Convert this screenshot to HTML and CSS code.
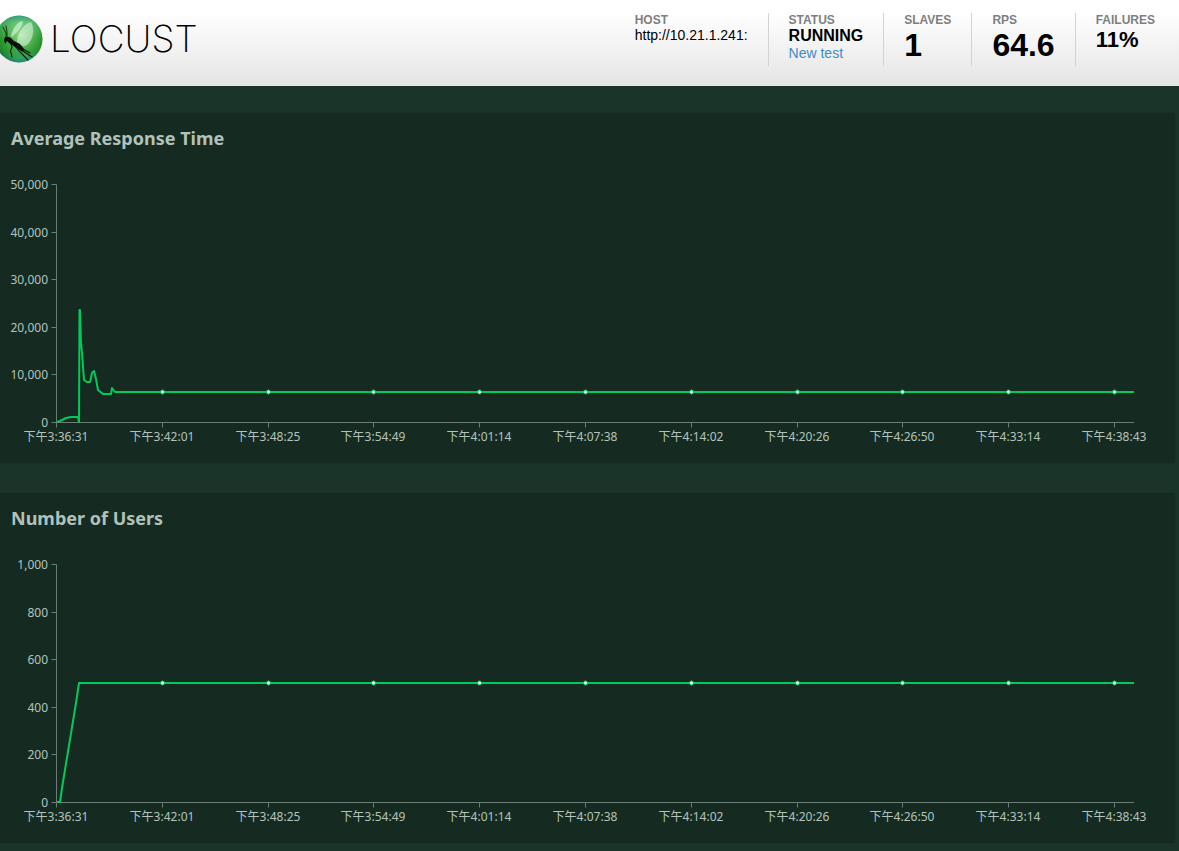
FILE: index.html
```html
<!DOCTYPE html>
<html lang="en">
<head>
<meta charset="utf-8">
<title>Locust</title>
<link rel="stylesheet" href="styles.css">
</head>
<body>
<header class="top">
  <div class="brand">
    <svg class="brand-mark" viewBox="0 0 44 50" aria-hidden="true">
      <defs>
        <linearGradient id="ball" x1="0" y1="0" x2="0" y2="1">
          <stop offset="0" stop-color="#3fa3a0"/>
          <stop offset=".15" stop-color="#5cbd74"/>
          <stop offset=".5" stop-color="#2c9a2c"/>
          <stop offset=".78" stop-color="#2fa038"/>
          <stop offset="1" stop-color="#52c8b8"/>
        </linearGradient>
        <radialGradient id="rim" cx=".55" cy=".42" r=".56">
          <stop offset="0" stop-color="#c8f4c4" stop-opacity=".75"/>
          <stop offset=".5" stop-color="#7ed080" stop-opacity=".35"/>
          <stop offset=".85" stop-color="#107a18" stop-opacity=".3"/>
          <stop offset="1" stop-color="#0d6040" stop-opacity=".6"/>
        </radialGradient>
      </defs>
      <circle cx="19" cy="25" r="23.5" fill="url(#ball)"/>
      <circle cx="19" cy="25" r="23.5" fill="url(#rim)"/>
      <path d="M11 22C13 13 18 8 22 7C25 8 20 16 12 23Z" fill="#e4f8e2" opacity=".6"/>
      <path d="M17 27C18 17 25 9 31 8C36 16 32 29 25 32C20 32 17 30 17 27Z" fill="#e4f8e2" opacity=".55"/>
      <path d="M4 26L5 23L9 23L11 24L14 27L20 30L24 35L23 38L18 35L12 31L9 29L7 27L5 30Z" fill="#0b120d"/>
      <g fill="none" stroke="#0b120d" stroke-linecap="round">
        <path d="M6 24L6 19L3 13M7 23L7 18L6 12" stroke-width=".8"/>
        <path d="M10 28L12 33L10.500 37L12 43" stroke-width="1"/>
        <path d="M15 32L20 38L28 46M20 35L32 43M23 35L30 39" stroke-width="1.100"/>
      </g>
    </svg>
    <span class="brand-name">LOCUST</span>
  </div>
  <div class="stats">
    <div class="stat"><span class="label">HOST</span><span class="host">http://10.21.1.241:</span></div>
    <div class="stat"><span class="label">STATUS</span><strong class="status">RUNNING</strong><a class="link" href="#new">New test</a></div>
    <div class="stat"><span class="label">SLAVES</span><strong class="big">1</strong></div>
    <div class="stat"><span class="label">RPS</span><strong class="big">64.6</strong></div>
    <div class="stat"><span class="label">FAILURES</span><strong class="medium">11%</strong></div>
  </div>
</header>
<main class="charts">
  <section class="panel">
    <h2 class="title">Average Response Time</h2>
    <svg class="chart" id="response" viewBox="0 0 1175 300" role="img" aria-label="Average Response Time"></svg>
  </section>
  <section class="panel">
    <h2 class="title">Number of Users</h2>
    <svg class="chart" id="users" viewBox="0 0 1175 300" role="img" aria-label="Number of Users"></svg>
  </section>
</main>
<script src="charts.js"></script>
</body>
</html>
```
FILE: styles.css
```css
* { box-sizing: border-box; }
body {
  margin: 0;
  background: #1a342a;
  color: #b3c3bc;
  font-family: "Noto Sans", "Noto Sans CJK SC", sans-serif;
}
.top {
  display: flex;
  justify-content: space-between;
  align-items: flex-start;
  height: 86px;
  padding: 13px 4px 0 0;
  background: linear-gradient(#fff 0, #fff 15%, #e4e4e4 100%);
  font-family: "Liberation Sans", Arial, sans-serif;
  color: #000;
}
.brand { display: flex; align-items: center; gap: 6px; padding-top: 1px; }
.brand-mark { width: 44px; height: 50px; }
.brand-name {
  font-family: Inter, Lato, sans-serif;
  font-weight: 200;
  font-size: 37px;
  line-height: 50px;
}
.stats { display: flex; }
.stat {
  display: flex;
  flex-direction: column;
  align-items: flex-start;
  height: 53px;
  padding: 0 20px;
}
.stat + .stat { border-left: 1px solid #d3d3d3; }
.label { font-size: 12px; line-height: 14px; font-weight: bold; color: #7f7f7f; }
.host { font-size: 14px; line-height: 17px; }
.status { font-size: 16px; line-height: 18px; }
.link { font-size: 14px; line-height: 17px; color: #428bca; text-decoration: none; }
.big { font-size: 32px; line-height: 36px; }
.medium { font-size: 22px; line-height: 26px; }
.charts { display: flex; flex-direction: column; gap: 30px; padding: 27px 4px 8px 0; }
.panel { background: #152b22; border-radius: 3px; box-shadow: 0 0 1px #10231b; }
.title {
  margin: 0;
  padding: 13px 11px;
  font-size: 18px;
  line-height: 24px;
  font-weight: bold;
  color: #b1c2ba;
}
.chart { display: block; width: 100%; }
.axis { fill: none; stroke: #6a7e75; }
.tick { fill: #b3c3bc; font-size: 12px; }
.tick-y { text-anchor: end; }
.tick-x { text-anchor: middle; }
.series { fill: none; stroke: #00ca5a; stroke-width: 2; stroke-linejoin: round; }
.dot { fill: #fff; stroke: #00ca5a; stroke-width: 1; }
```
FILE: charts.js
```js
const times = ["3:36:31", "3:42:01", "3:48:25", "3:54:49", "4:01:14", "4:07:38",
  "4:14:02", "4:20:26", "4:26:50", "4:33:14", "4:38:43"];
const left = 56.5, top0 = 21.5, bottom = 259.5, right = 1134;

function draw(id, max, points, level) {
  let out = "";
  let axis = `M${left} ${top0}V${bottom}H${right}`;
  for (let i = 0; i <= 5; i++) {
    const y = Math.floor(bottom - i * (bottom - top0) / 5) + 0.5;
    axis += `M${left - 5} ${y}H${left}`;
    out += `<text class="tick tick-y" x="48" y="${y + 4.5}">${(max * i / 5).toLocaleString("en-US")}</text>`;
  }
  let dots = "";
  times.forEach((t, i) => {
    const x = Math.floor(left + i * 105.8) + 0.5;
    axis += `M${x} ${bottom}v5`;
    out += `<text class="tick tick-x" x="${x - 0.5}" y="278">下午${t}</text>`;
    if (i > 0) dots += `<circle class="dot" cx="${x}" cy="${level}" r="2"/>`;
  });
  document.getElementById(id).innerHTML =
    `<path class="axis" d="${axis}"/>${out}<polyline class="series" points="${points}"/>${dots}`;
}

draw("response", 50000,
  "57,259 60,258 66,255 71,254 78,254 79,259 79.500,147 80,147 81,180 82,190 84,217 87,219 90,219 92,210 94,208 96,216 98,227 103,231 111,231 112,225 115,229 1134,229", 229);
draw("users", 1000, "57,259 60,259 62,245 76,160 79,140 1134,140", 140);
```
